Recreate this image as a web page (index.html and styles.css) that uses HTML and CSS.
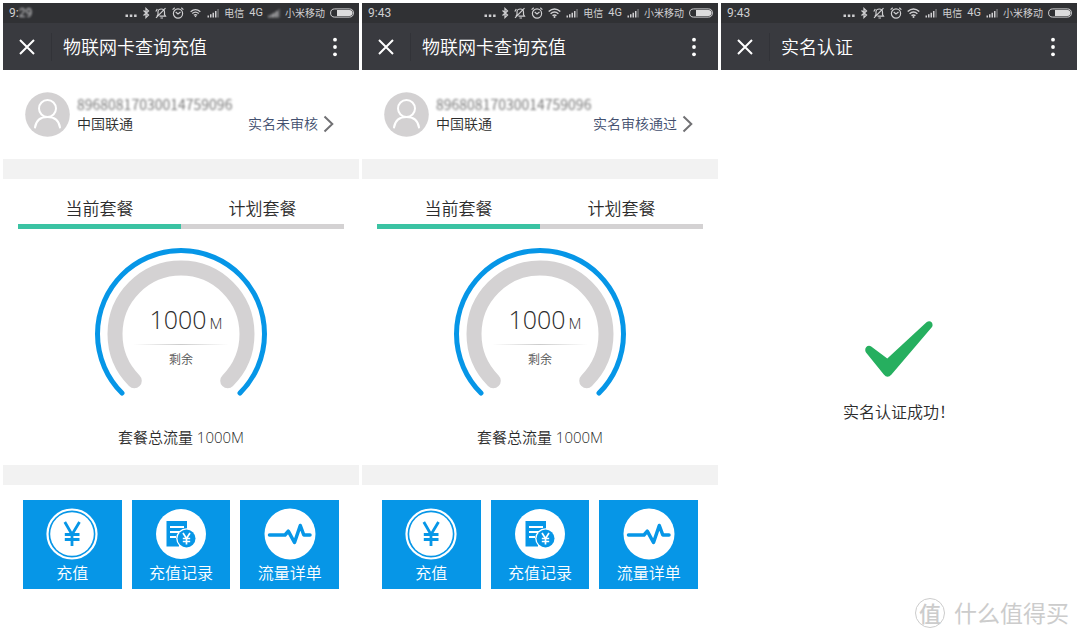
FILE: index.html
```html
<!DOCTYPE html>
<html lang="zh-CN">
<head>
<meta charset="utf-8">
<meta name="viewport" content="width=device-width, initial-scale=1">
<title>物联网卡查询充值</title>
<link rel="stylesheet" href="styles.css">
</head>
<body>
<svg class="sprite" aria-hidden="true">
  <symbol id="i-more" viewBox="0 0 12 12"><path d="M.5 7.500h2.500v2.500H.5zM4.800 7.500h2.500v2.500H4.800zM9.100 7.500h2.500v2.500H9.100z" fill="currentColor"/></symbol>
  <symbol id="i-bt" viewBox="0 0 8 12"><path d="M1.500 3.500l5 4.600L4 10.500v-9l2.500 2.400-5 4.600" fill="none" stroke="currentColor" stroke-width="1.300"/></symbol>
  <symbol id="i-mute" viewBox="0 0 12 12"><g fill="none" stroke="currentColor" stroke-width="1.200"><path d="M2 9.200L3 7.500V5C3 1 9.500 1 9.500 5v2.500l1 1.700H4.500M5.500 11h2.500M1 10.800L10.500 1.200M.8 4.500L2.300 2"/></g></symbol>
  <symbol id="i-alarm" viewBox="0 0 12 12"><g fill="none" stroke="currentColor" stroke-width="1.200"><circle cx="6" cy="6.500" r="4.600"/><path d="M3.700 5L6 7l2.500-2M.6 2.600L2.700.8M11.400 2.600L9.300.8"/></g></symbol>
  <symbol id="i-wifi" viewBox="0 0 13 12"><g fill="none" stroke="currentColor" stroke-width="1.500"><path d="M.7 4.500q5.800-5 11.600 0M2.600 6.700q3.900-3.300 7.800 0M4.500 8.700q2-1.600 4 0"/></g><circle cx="6.500" cy="10" r="1" fill="currentColor"/></symbol>
  <symbol id="i-signal" viewBox="0 0 12 12"><path d="M.5 8.500h1.500v2H.5zM3 7.300h1.500v3.200H3zM5.500 5.800H7v4.700H5.500zM8 4h1.500v6.500H8z" fill="currentColor"/><path d="M10.300 2h1.500v8.500h-1.500z" fill="currentColor" opacity=".4"/></symbol>
  <symbol id="i-battery" viewBox="0 0 24 10"><rect x=".6" y=".9" width="22.800" height="8.200" rx="4.100" fill="none" stroke="currentColor"/><path d="M7 2h12.500a3 3 0 0 1 0 6H7z" fill="#dcdcdd"/></symbol>
  <symbol id="i-close" viewBox="0 0 16 16"><path d="M1 1l14 14M15 1L1 15" fill="none" stroke="currentColor" stroke-width="2"/></symbol>
  <symbol id="i-menu" viewBox="0 0 4 20"><circle cx="2" cy="2.700" r="1.900"/><circle cx="2" cy="10" r="1.900"/><circle cx="2" cy="17.300" r="1.900"/></symbol>
  <symbol id="i-user" viewBox="0 0 45 45"><circle cx="22.500" cy="22.500" r="22.300" fill="#d3d1d2"/><g fill="none" stroke="#fff" stroke-width="2" stroke-linecap="round"><circle cx="22.500" cy="16.500" r="8.500"/><path d="M10 35.500C11 28.500 16 25 22.500 25S34 28.500 35 35.500"/></g></symbol>
  <symbol id="i-chevron" viewBox="0 0 11 18"><path d="M1.500 1.500L9.300 9l-7.800 7.500" fill="none" stroke="#717174" stroke-width="2"/></symbol>
  <symbol id="i-gauge" viewBox="0 0 174 150"><g fill="none" stroke-linecap="round"><path d="M28 146.100A83.500 83.500 0 1 1 146 146.100" stroke="#0696e7" stroke-width="5"/><path d="M40.300 133.700A66 66 0 1 1 133.700 133.700" stroke="#d4d2d3" stroke-width="15"/></g></symbol>
  <symbol id="i-yuan" viewBox="0 0 52 52"><circle cx="26" cy="26" r="24.500" fill="none" stroke="#fff" stroke-width="2.200"/><circle cx="26" cy="26" r="21.800" fill="#fff"/><path d="M18.800 14L26 26.500 33.500 14M26 26v12M18.800 26.500h14.700M18.800 31.500h14.700" fill="none" stroke="#0696e7" stroke-width="2.800"/></symbol>
  <symbol id="i-record" viewBox="0 0 52 52"><circle cx="26" cy="26" r="25" fill="#fff"/><path d="M11.500 13H32v12H24v13.500H11.500z" fill="#0696e7"/><path d="M15 19h14M15 24h10M15 29h6" stroke="#fff" stroke-width="2" fill="none"/><circle cx="31.500" cy="30.500" r="10.300" fill="#fff"/><circle cx="31.500" cy="30.500" r="9" fill="#0696e7"/><path d="M28 25l3.500 5.500L35 25M31.500 30v6.500M27.800 30.500h7.400M27.800 33.500h7.400" fill="none" stroke="#fff" stroke-width="1.700"/></symbol>
  <symbol id="i-pulse" viewBox="0 0 52 52"><circle cx="26" cy="26" r="25.500" fill="#fff"/><path d="M5.500 27h15.500l3.300-3.800 6.200 11.300L36.300 17.500l3.500 9.500H46" fill="none" stroke="#0696e7" stroke-width="3.500" stroke-linecap="round" stroke-linejoin="round"/></symbol>
</svg>

<main class="screens">
  <section class="screen">
    <div class="status">
      <span class="time">9:<span class="smudge">29</span></span>
      <svg class="ic"><use href="#i-more"/></svg><svg class="ic bt"><use href="#i-bt"/></svg><svg class="ic"><use href="#i-mute"/></svg><svg class="ic"><use href="#i-alarm"/></svg><svg class="ic wifi weak"><use href="#i-wifi"/></svg><svg class="ic"><use href="#i-signal"/></svg>
      <span>电信</span><span class="net">4G</span><svg class="ic smudge"><use href="#i-signal"/></svg><span>小米移动</span><svg class="battery"><use href="#i-battery"/></svg>
    </div>
    <header class="nav">
      <button class="close" aria-label="关闭"><svg><use href="#i-close"/></svg></button>
      <h1>物联网卡查询充值</h1>
      <button class="menu" aria-label="更多"><svg><use href="#i-menu"/></svg></button>
    </header>
    <div class="profile">
      <svg class="avatar"><use href="#i-user"/></svg>
      <div class="account"><span class="number">89680817030014759096</span>
        <div class="carrier"><span>中国联通</span><a class="verify" href="#">实名未审核<svg><use href="#i-chevron"/></svg></a></div>
      </div>
    </div>
    <div class="plan">
      <div class="tabs"><button class="tab active">当前套餐</button><button class="tab">计划套餐</button></div>
      <div class="gauge">
        <svg class="ring"><use href="#i-gauge"/></svg>
        <div class="reading"><p class="amount">1000<span>M</span></p><p class="left">剩余</p></div>
      </div>
      <p class="total">套餐总流量 1000M</p>
    </div>
    <div class="tiles">
      <button class="tile"><svg><use href="#i-yuan"/></svg>充值</button>
      <button class="tile"><svg><use href="#i-record"/></svg>充值记录</button>
      <button class="tile"><svg><use href="#i-pulse"/></svg>流量详单</button>
    </div>
  </section>

  <section class="screen">
    <div class="status">
      <span class="time">9:43</span>
      <svg class="ic"><use href="#i-more"/></svg><svg class="ic bt"><use href="#i-bt"/></svg><svg class="ic"><use href="#i-mute"/></svg><svg class="ic"><use href="#i-alarm"/></svg><svg class="ic wifi"><use href="#i-wifi"/></svg><svg class="ic"><use href="#i-signal"/></svg>
      <span>电信</span><span class="net">4G</span><svg class="ic"><use href="#i-signal"/></svg><span>小米移动</span><svg class="battery"><use href="#i-battery"/></svg>
    </div>
    <header class="nav">
      <button class="close" aria-label="关闭"><svg><use href="#i-close"/></svg></button>
      <h1>物联网卡查询充值</h1>
      <button class="menu" aria-label="更多"><svg><use href="#i-menu"/></svg></button>
    </header>
    <div class="profile">
      <svg class="avatar"><use href="#i-user"/></svg>
      <div class="account"><span class="number">89680817030014759096</span>
        <div class="carrier"><span>中国联通</span><a class="verify" href="#">实名审核通过<svg><use href="#i-chevron"/></svg></a></div>
      </div>
    </div>
    <div class="plan">
      <div class="tabs"><button class="tab active">当前套餐</button><button class="tab">计划套餐</button></div>
      <div class="gauge">
        <svg class="ring"><use href="#i-gauge"/></svg>
        <div class="reading"><p class="amount">1000<span>M</span></p><p class="left">剩余</p></div>
      </div>
      <p class="total">套餐总流量 1000M</p>
    </div>
    <div class="tiles">
      <button class="tile"><svg><use href="#i-yuan"/></svg>充值</button>
      <button class="tile"><svg><use href="#i-record"/></svg>充值记录</button>
      <button class="tile"><svg><use href="#i-pulse"/></svg>流量详单</button>
    </div>
  </section>

  <section class="screen">
    <div class="status">
      <span class="time">9:43</span>
      <svg class="ic"><use href="#i-more"/></svg><svg class="ic bt"><use href="#i-bt"/></svg><svg class="ic"><use href="#i-mute"/></svg><svg class="ic"><use href="#i-alarm"/></svg><svg class="ic wifi"><use href="#i-wifi"/></svg><svg class="ic"><use href="#i-signal"/></svg>
      <span>电信</span><span class="net">4G</span><svg class="ic"><use href="#i-signal"/></svg><span>小米移动</span><svg class="battery"><use href="#i-battery"/></svg>
    </div>
    <header class="nav">
      <button class="close" aria-label="关闭"><svg><use href="#i-close"/></svg></button>
      <h1>实名认证</h1>
      <button class="menu" aria-label="更多"><svg><use href="#i-menu"/></svg></button>
    </header>
    <div class="result">
      <svg viewBox="0 0 68 56"><path d="M6.200 25.400L22.300 37.500 61.500 1.300C65.500-1.500 69 2.500 67 6L26.500 53.500Q22.500 58 18.800 53.500L1 31.500C-1.500 27.500 2.500 23 6.200 25.400z" fill="#26af5f"/></svg>
      <p>实名认证成功！</p>
    </div>
    <footer class="brand"><span class="seal">值</span><span>什么值得买</span></footer>
  </section>
</main>
</body>
</html>
```

FILE: styles.css
```css
* { box-sizing: border-box; }
body {
  margin: 0;
  background: #fff;
  color: #2c2c2c;
  font-family: "Open Sans", "Noto Sans CJK SC", sans-serif;
  font-weight: 350;
}
h1, p { margin: 0; font-weight: inherit; }
button {
  border: 0;
  padding: 0;
  background: none;
  color: inherit;
  font: inherit;
}
svg { display: block; flex: none; }
.sprite { position: absolute; width: 0; height: 0; }

.screens {
  display: grid;
  grid-template-columns: repeat(3, 1fr);
  gap: 3px;
  min-height: 100vh;
  padding: 3px 3px 0;
}
.screen { display: flex; flex-direction: column; min-width: 0; }

.status {
  display: flex;
  align-items: center;
  gap: 5px;
  height: 20px;
  padding: 0 5px 0 6px;
  background: #303134;
  color: #cfcfd1;
  font-size: 10px;
  font-weight: 400;
  line-height: 20px;
  white-space: nowrap;
}
.time { margin-right: auto; font-family: Roboto, sans-serif; font-size: 12px; }
.net { font-family: Roboto, sans-serif; font-size: 11px; }
.ic { width: 12px; height: 12px; }
.bt { width: 8px; }
.wifi { width: 13px; }
.weak { padding: 1px; }
.battery { width: 24px; height: 10px; }
.smudge { filter: blur(1px); }

.nav {
  display: flex;
  align-items: center;
  height: 47px;
  background: #393a3f;
  color: #fff;
}
.close { padding: 6px 16px; border-right: 1px solid #323338; }
.close svg { width: 16px; height: 16px; }
.nav h1 { flex: 1; padding-left: 11px; font-size: 18px; line-height: 24px; }
.menu { padding: 0 22px; }
.menu svg { width: 4px; height: 20px; fill: #fff; }

.profile {
  display: flex;
  align-items: center;
  gap: 7px;
  padding: 22px 25px 22px 22px;
  font-size: 14px;
  line-height: 20px;
}
.avatar { width: 45px; height: 45px; }
.account { flex: 1; padding-bottom: 2px; }
.number {
  display: block;
  color: #777;
  font-family: "Noto Sans CJK SC", sans-serif;
  font-weight: 400;
  filter: blur(1px);
}
.carrier { display: flex; justify-content: space-between; }
.verify {
  display: flex;
  align-items: center;
  gap: 5px;
  color: #43506f;
  text-decoration: none;
  white-space: nowrap;
}
.verify svg { width: 11px; height: 18px; }

.plan {
  padding: 16px 15px;
  border: solid #f2f2f2;
  border-width: 20px 0;
}
.tabs { display: grid; grid-template-columns: 1fr 1fr; }
.tab {
  padding-bottom: 2px;
  border-bottom: 5px solid #d4d2d3;
  font-size: 17px;
  line-height: 27px;
}
.active { border-color: #3bc3a3; }
.gauge { display: grid; justify-items: center; padding-top: 18px; }
.ring, .reading { grid-area: 1 / 1; }
.ring { width: 174px; height: 150px; }
.reading { width: 94px; padding-top: 57px; text-align: center; }
.amount {
  padding: 0 0 6px 10px;
  font-size: 25px;
  font-weight: 300;
  line-height: 30px;
  white-space: nowrap;
}
.amount span { padding-left: 3px; font-size: 15px; }
.left {
  padding-top: 6px;
  border-top: 1px solid;
  border-image: linear-gradient(90deg, #fff, #ccc 50%, #fff) 1;
  color: #555;
  font-size: 12px;
  line-height: 18px;
}
.total { padding-top: 28px; font-size: 15px; line-height: 24px; text-align: center; }

.tiles {
  display: grid;
  grid-template-columns: repeat(3, 1fr);
  gap: 10px;
  padding: 15px 20px;
}
.tile {
  display: flex;
  flex-direction: column;
  align-items: center;
  padding: 8px 0 3px;
  background: #0696e7;
  color: #fff;
  font-size: 16px;
  line-height: 26px;
}
.tile svg { width: 52px; height: 52px; }

.result { padding-top: 251px; font-size: 16px; line-height: 24px; text-align: center; }
.result svg { width: 68px; height: 56px; margin: 0 auto 23px; }

.brand {
  display: flex;
  align-items: center;
  justify-content: flex-end;
  gap: 9px;
  margin-top: auto;
  padding: 0 8px 11px;
  color: #ccc;
  font-size: 23px;
  font-weight: 400;
  line-height: 30px;
}
.seal {
  width: 30px;
  border: 1px solid #ccc;
  border-radius: 50%;
  font-size: 22px;
  font-weight: 500;
  line-height: 28px;
  text-align: center;
}
```
